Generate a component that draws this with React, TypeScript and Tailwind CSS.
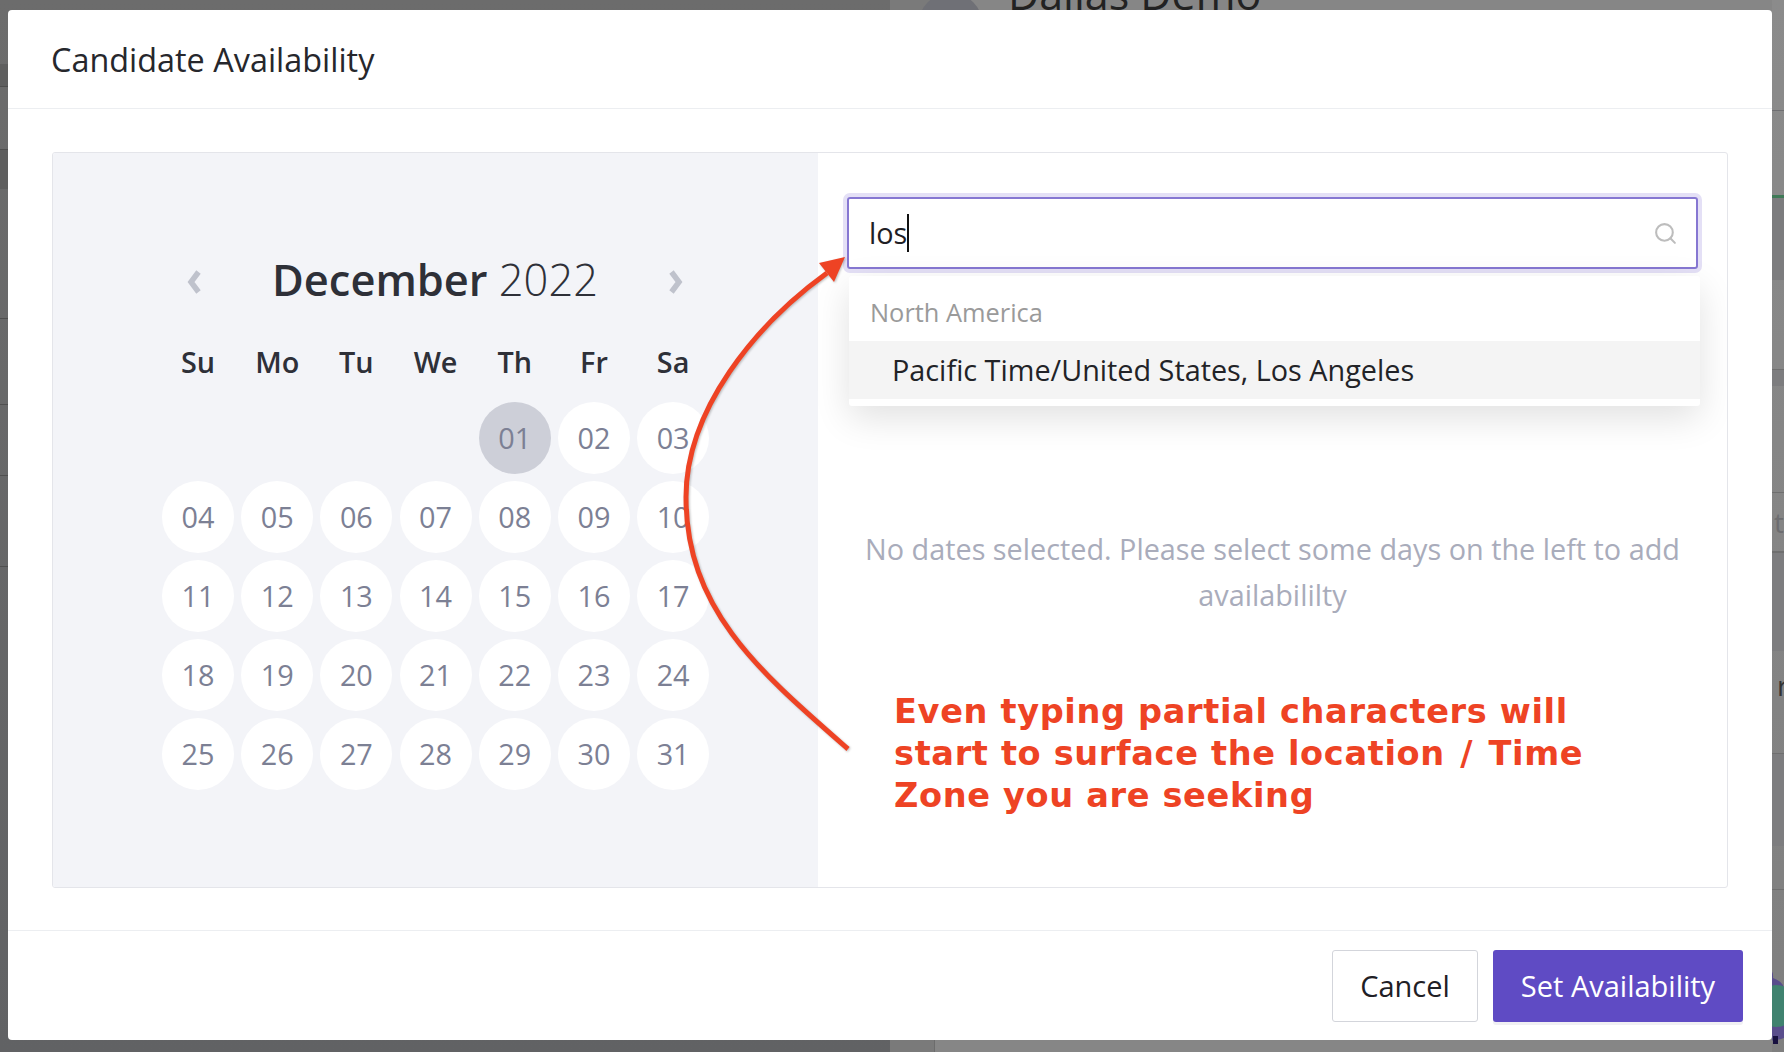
import { Search } from "lucide-react";

const weekdays = ["Su", "Mo", "Tu", "We", "Th", "Fr", "Sa"];
const days = Array.from({ length: 31 }, (_, i) => String(i + 1).padStart(2, "0"));

const Chevron = ({ flip }: { flip?: boolean }) => (
    <svg width="18" height="28" viewBox="0 0 18 28" className={flip ? "rotate-180" : ""}>
        <path d="M13.5 4 L6 14 L13.5 24" fill="none" stroke="#bfc2cc" strokeWidth="5.5" />
    </svg>
);

// dimmed page behind the modal, only its edges are visible
const Backdrop = () => (
    <div className="absolute inset-0 flex overflow-hidden">
        <div className="flex w-[890px] flex-col bg-[linear-gradient(180deg,#6c6c6c,#616264)]">
            <div className="h-[64px]" />
            <div className="h-[23px] w-[8px] border-b border-[#4f4f4f] bg-[#5f5f5f]" />
            <div className="h-[62px] w-[8px]" />
            <div className="h-[40px] w-[8px] border-t border-[#4f4f4f] bg-[#5f5f5f]" />
            <div className="h-[130px] w-[8px] border-b border-[#4f4f4f]" />
            <div className="h-[86px] w-[8px] border-b border-[#505050]" />
            <div className="h-[71px] w-[8px] border-b border-[#505050]" />
            <div className="h-[91px] w-[8px] border-b border-[#505050]" />
        </div>
        <div className="flex-1 bg-[linear-gradient(90deg,#7a7a7a_44px,#6c6c6c_44px,#6c6c6c_45px,#868686_45px)]">
            <div className="-mt-[7px] flex items-start pl-[28px]">
                <div className="h-[65px] w-[65px] rounded-full bg-[#6f7076]" />
                <div className="-mt-[29px] ml-[25px] text-[43px] leading-[60px] text-[#222]">Dallas Demo</div>
            </div>
        </div>
        <div className="relative flex w-[12px] flex-col bg-[linear-gradient(180deg,#8b8b8b,#7f7f7f)]">
            <div className="h-[111px] shrink-0 border-b border-[#6f6f72]" />
            <div className="h-[84px] shrink-0" />
            <div className="h-[3px] shrink-0 bg-[#3f7a57]" />
            <div className="h-[82px] shrink-0 bg-[#7c7c7e]" />
            <div className="h-[89px] shrink-0" />
            <div className="h-[17px] shrink-0 border-t border-[#6f6f6f] bg-[#7d7d7f]" />
            <div className="h-[107px] shrink-0 border-b border-[#6f6f6f]" />
            <div className="flex h-[59px] shrink-0 items-center border-b border-[#6f6f6f] pl-[2px] text-[28px] text-[#6d6d70]">
                t
            </div>
            <div className="h-[99px] shrink-0 border-t border-[#6f6f6f] bg-[#7d7d7f]" />
            <div className="h-[102px] shrink-0 overflow-hidden pl-[5px] pt-[14px] text-[28px] leading-[40px] text-[#333]">
                r
            </div>
            <div className="h-[93px] shrink-0 border-t border-[#6f6f6f] bg-[#7d7d7f]" />
            <div className="h-[44px] shrink-0 border-b border-[#6f6f6f]" />
            <svg width="12" height="92" viewBox="18 0 12 92" className="absolute right-0 top-[960px]">
                <path d="M0 22 L8 20 Q6 10 12 9 Q20 9 19 18 Q30 22 30 30 L30 78 Q14 84 0 76 Z" fill="#594d8c" />
                <circle cx="22" cy="46" r="21" fill="#40826f" />
                <rect x="19" y="76" width="5" height="8" fill="#17103f" />
            </svg>
        </div>
    </div>
);

const Calendar = () => (
    <div className="w-[765px] shrink-0 bg-[#f3f4f8] pl-[109px] pt-[99px]">
        <div className="flex h-[56px] w-[548px] items-center justify-between pl-[23px] pr-[25px]">
            <div className="mt-[3px]">
                <Chevron />
            </div>
            <div className="text-[43.4px] leading-[56px] text-[#2e3038]">
                <span className="font-semibold">December</span> <span className="font-light">2022</span>
            </div>
            <div className="mt-[3px]">
                <Chevron flip />
            </div>
        </div>
        <div className="mt-[34px] grid grid-cols-[repeat(7,72px)] gap-x-[7.2px]">
            {weekdays.map((d) => (
                <div key={d} className="text-center text-[28.8px] leading-[40px] font-semibold text-[#2e3038]">
                    {d}
                </div>
            ))}
        </div>
        <div className="mt-[20px] grid grid-cols-[repeat(7,72px)] gap-x-[7.2px] gap-y-[7px]">
            {days.map((d, i) => (
                <div
                    key={d}
                    className={`flex h-[72px] items-center justify-center rounded-full text-[28.8px] text-[#7c8094] ${
                        i === 0 ? "col-start-5 bg-[#cdcfd8]" : "bg-white"
                    }`}
                >
                    {d}
                </div>
            ))}
        </div>
    </div>
);

const TimezonePanel = () => (
    <div className="relative flex-1 pl-[29px] pr-[29px] pt-[44px]">
        <div className="flex h-[72px] items-center justify-between rounded-[3px] border-2 border-[#8677d2] px-[20px] shadow-[0_0_0_4px_#e4e0f6]">
            <div className="flex items-center text-[28.8px] text-[#1f2025]">
                los
                <span className="h-[38px] w-[2px] bg-[#111]" />
            </div>
            <Search size={25} strokeWidth={2} className="relative left-[2px] text-[#bdbdbd]" />
        </div>

        <div className="absolute left-[31px] top-[123px] h-[130px] w-[851px] rounded-[3px] bg-white shadow-[0_12px_36px_rgba(0,0,0,0.12)]">
            <div className="flex h-[65px] items-center pl-[21px] pt-[8px] text-[25.4px] text-[#9a9a9a]">North America</div>
            <div className="flex h-[58px] items-center bg-[#f4f4f4] pl-[43px] text-[28.8px] text-[#222327]">
                Pacific Time/United States, Los Angeles
            </div>
        </div>

        <p className="mt-[257px] text-center text-[28.8px] leading-[45.5px] text-[#a9acbb]">
            No dates selected. Please select some days on the left to add availabililty
        </p>
    </div>
);

export default function App() {
    return (
        <div className="relative h-[1052px] w-[1784px] overflow-hidden font-['Open_Sans',sans-serif]">
            <Backdrop />

            <div className="relative ml-[8px] mt-[10px] flex h-[1030px] w-[1764px] flex-col rounded-[4px] bg-white">
                <div className="flex h-[99px] items-center border-b border-[#eceef1] pl-[44px] text-[32.4px] text-[#26272c]">
                    <span className="-ml-px">Candidate Availability</span>
                </div>
                <div className="px-[44px] pt-[43px]">
                    <div className="flex h-[736px] overflow-hidden rounded-[3px] border border-[#e4e5ea]">
                        <Calendar />
                        <TimezonePanel />
                    </div>
                </div>
                <div className="mt-[42px] flex flex-1 items-start justify-end gap-[15px] border-t border-[#eceef1] pr-[29px] pt-[19px]">
                    <button className="h-[72px] w-[146px] rounded-[3px] border border-[#d3d5db] bg-white text-[29px] text-[#1f2025]">
                        Cancel
                    </button>
                    <button className="h-[72px] w-[250px] rounded-[3px] bg-[#5f4bc4] text-[29px] text-white shadow-[0_3px_0_#f0f0f3]">
                        Set Availability
                    </button>
                </div>
            </div>

            {/* hand drawn annotation on top of the screenshot */}
            <svg
                width="1784"
                height="1052"
                className="pointer-events-none absolute inset-0 drop-shadow-[1px_1px_1px_rgba(0,0,0,0.25)]"
            >
                <path
                    d="M848 749 C760 672 686 610 686 497 C686 410 755 325 827 273"
                    fill="none"
                    stroke="#ee4324"
                    strokeWidth="5"
                />
                <path d="M845 257 L819 263 L834 282 Z" fill="#ee4324" />
            </svg>
            <div className="absolute left-[894px] top-[691px] font-['DejaVu_Sans',sans-serif] text-[33.6px] leading-[42px] font-bold tracking-[0.65px] text-[#ee4324]">
                Even typing partial characters will
                <br />
                start to surface the location <span className="mx-[3px]">/</span> Time
                <br />
                Zone you are seeking
            </div>
        </div>
    );
}
